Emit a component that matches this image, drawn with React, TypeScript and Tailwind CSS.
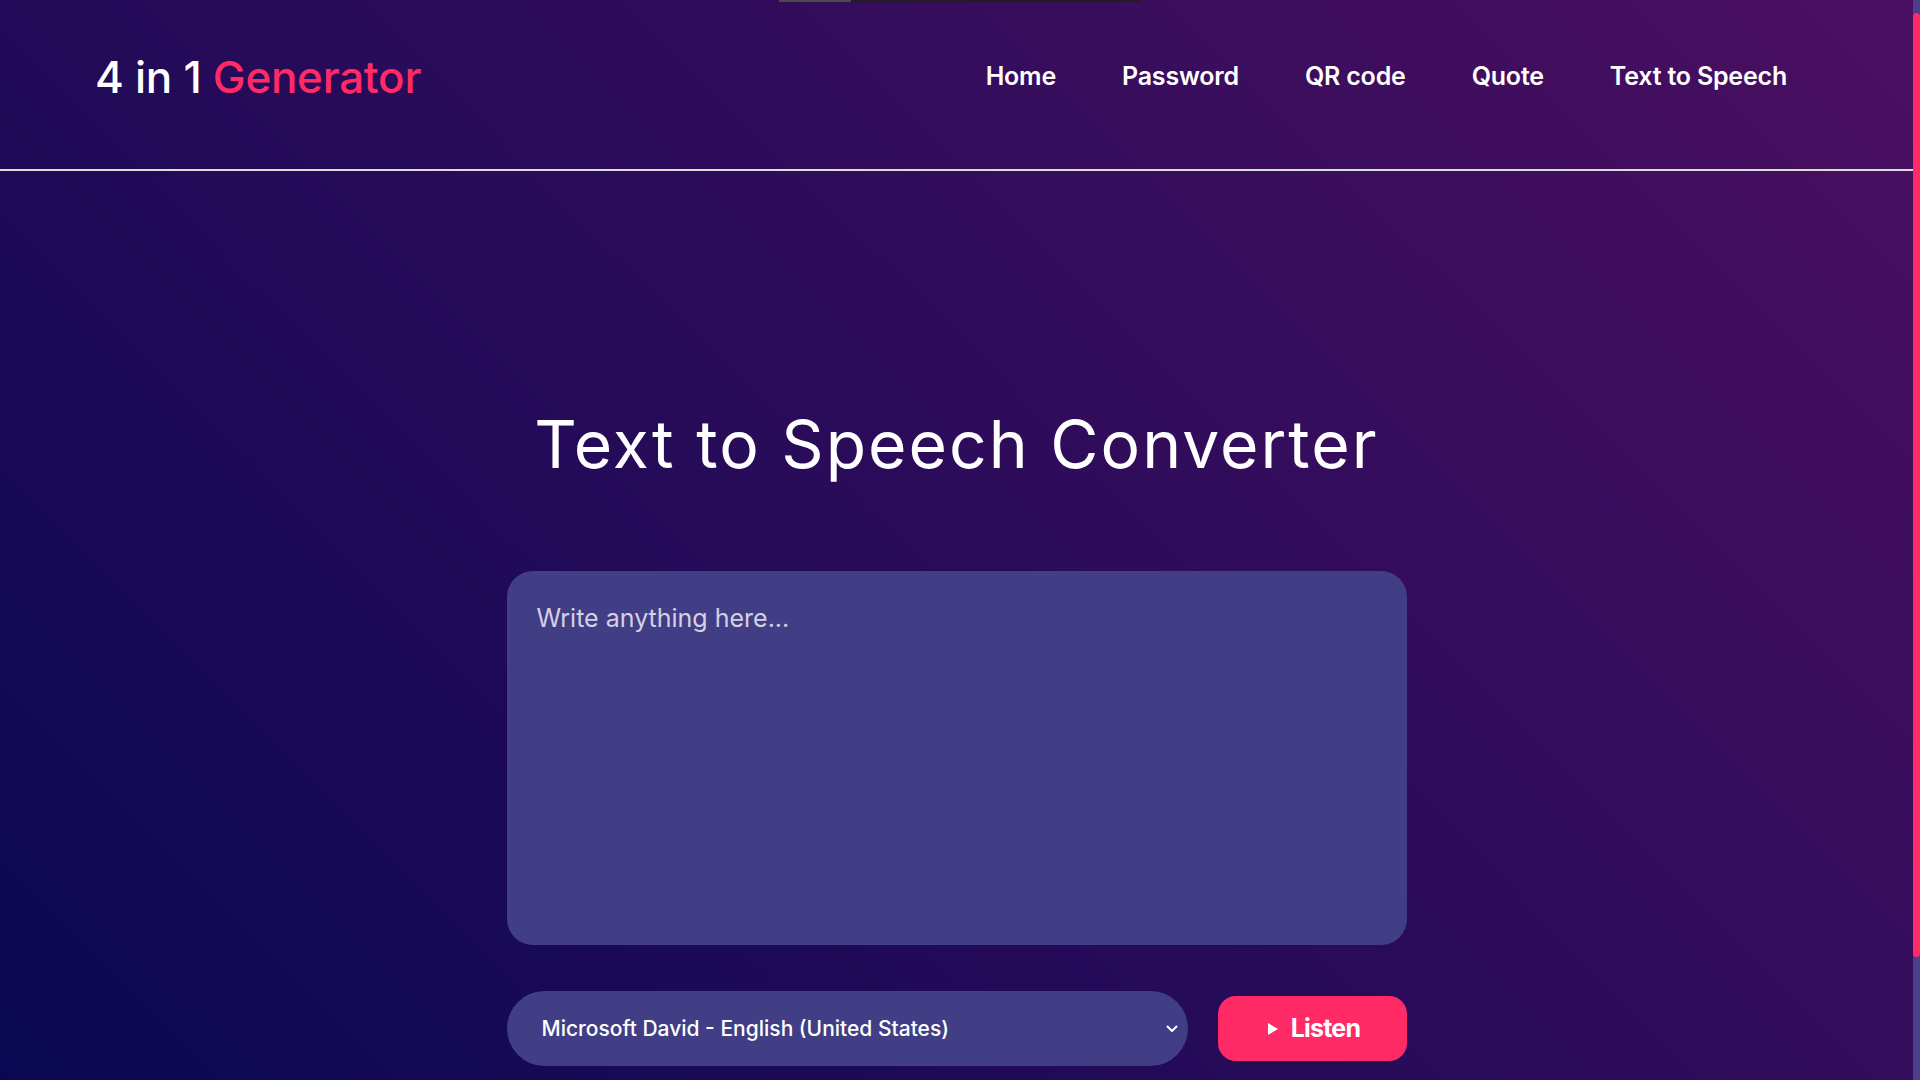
import React from "react";

export default function App() {
  const nav = ["Home", "Password", "QR code", "Quote", "Text to Speech"];
  return (
    <div className="flex h-[1080px] w-full overflow-hidden font-['Inter','Noto_Sans',sans-serif]">
      <div className="relative flex flex-1 flex-col bg-[linear-gradient(45deg,#0a0852,#4b0f61)]">
        <div className="absolute left-[779px] top-0 flex h-[2px]">
          <div className="w-[72px] bg-[#4b4b4b]" />
          <div className="w-[290px] bg-[#1f1f1f]" />
        </div>
        <header className="flex h-[171px] items-center justify-between border-b-2 border-[#dcdcdc] pb-[15px] pl-[95px] pr-[126px]">
          <div className="text-[44px] font-medium tracking-[-0.3px] text-white">
            4 in 1 <span className="text-[#ff2a66]">Generator</span>
          </div>
          <nav className="flex items-center gap-[66px]">
            {nav.map((n) => (
              <a key={n} className="text-[25px] font-semibold tracking-[-0.2px] text-white">
                {n}
              </a>
            ))}
          </nav>
        </header>
        <main className="flex flex-col items-center pt-[240px]">
          <h1 className="text-[66px] font-normal leading-none tracking-[2px] text-white">Text to Speech Converter</h1>
          <textarea
            placeholder="Write anything here..."
            className="mt-[94px] h-[374px] w-[900px] resize-none rounded-[26px] bg-[#423e85] px-[30px] pt-[32px] text-[25px] leading-[30px] text-white outline-none placeholder:text-[#d3d1e3]"
          />
          <div className="mt-[46px] flex w-[900px] items-center gap-[30px]">
            <div className="flex h-[75px] w-[681px] items-center justify-between rounded-full bg-[#423e85] pl-[35px] pr-[10px] text-[21px] font-medium text-white">
              <span>Microsoft David - English (United States)</span>
              <svg width="12" height="8" viewBox="0 0 12 8" fill="none">
                <path d="M1.5 1.5L6 6L10.5 1.5" stroke="white" strokeWidth="2" strokeLinecap="round" strokeLinejoin="round" />
              </svg>
            </div>
            <button className="flex h-[65px] w-[189px] items-center justify-center gap-[13px] rounded-[18px] bg-[#ff2a66] pl-[4px] text-[25px] font-bold tracking-[-0.8px] text-white">
              <svg width="10" height="12" viewBox="0 0 10 12">
                <path d="M0 0L10 6L0 12Z" fill="white" />
              </svg>
              <span>Listen</span>
            </button>
          </div>
        </main>
      </div>
      <div className="w-[7px] bg-[#4a3f8c] pt-[13px]">
        <div className="h-[944px] rounded-full bg-[#ff2a66]" />
      </div>
    </div>
  );
}
